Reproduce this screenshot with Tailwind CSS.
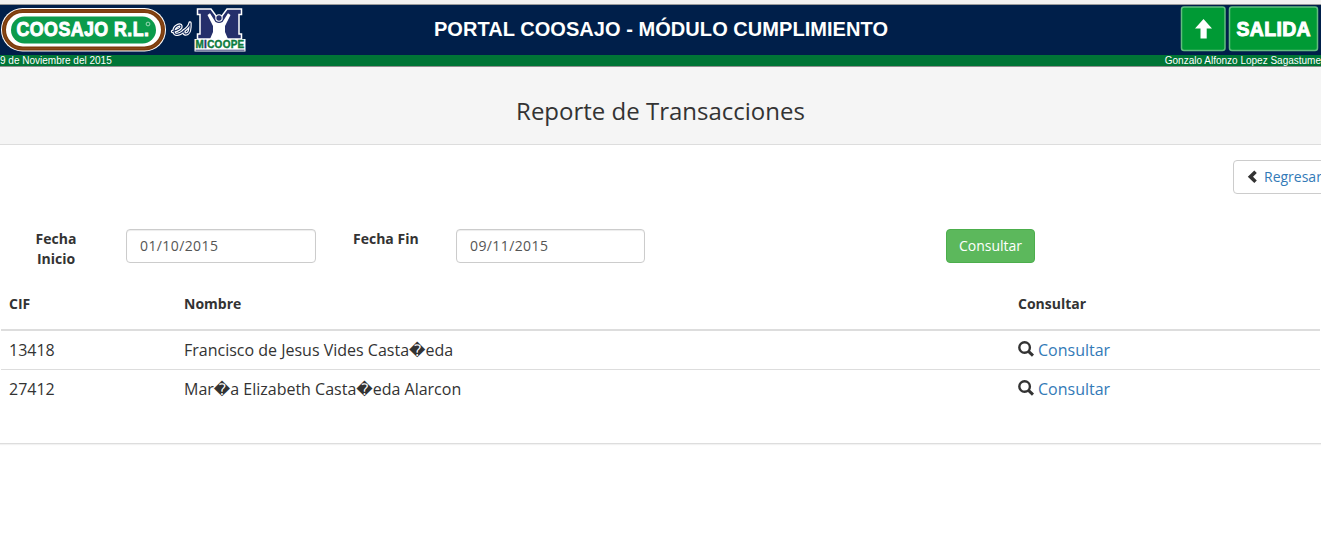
<!DOCTYPE html>
<html lang="es">
<head>
<meta charset="utf-8">
<title>Portal Coosajo</title>
<script src="https://cdn.jsdelivr.net/npm/@tailwindcss/browser@4"></script>
</head>
<body class="h-[537px] overflow-hidden bg-white font-['Open_Sans',sans-serif] text-sm leading-5 text-[#333]">
<header class="border-b border-[#8f8f8f] bg-[#f2f1f0] pt-1 font-['Liberation_Sans',sans-serif] text-white">
  <div class="grid h-[51px] grid-cols-[1fr_auto_1fr] items-center border-t border-[#9a9a9a] bg-[#001f4a]">
    <svg class="block h-[50px] w-[250px]" viewBox="0 5 250 50">
      <rect x="1" y="8" width="165" height="43.5" rx="21.5" fill="#fff"/>
      <rect x="4" y="11" width="159" height="37.500" rx="18.700" fill="none" stroke="#7c3c0c" stroke-width="4"/>
      <rect x="4" y="11" width="159" height="37.500" rx="18.700" fill="none" stroke="#96572a" stroke-width=".5"/>
      <rect x="11" y="16.500" width="145" height="27" rx="13.500" fill="#0b9b4b"/>
      <text x="16.500" y="36" textLength="133" lengthAdjust="spacingAndGlyphs" font-family="Liberation Sans" font-weight="700" font-size="19.500" letter-spacing=".5" fill="#fff" stroke="#fff" stroke-width=".9">COOSAJO R.L.</text>
      <circle cx="148" cy="24" r="1.900" fill="none" stroke="#bfe6cf" stroke-width=".8"/>
      <g fill="none" stroke-linecap="round" stroke-linejoin="round">
        <path d="M172.500 31.500c5-1 9-3 8.500-5.500s-7 0-7 5 5 4 10 0" stroke="#fff" stroke-width="3.400"/>
        <path d="M183.500 31c3-2 6-5 6.500-8 .2 4 .5 9-2.500 10.500-2 1-4 .3-3.500-1.500" stroke="#fff" stroke-width="3.400"/>
        <path d="M172.500 31.500c5-1 9-3 8.500-5.500s-7 0-7 5 5 4 10 0M183.500 31c3-2 6-5 6.500-8 .2 4 .5 9-2.500 10.500-2 1-4 .3-3.500-1.500" stroke="#10275a" stroke-width="1.100"/>
      </g>
      <path d="M197.500 9H211l8 11 8-11h14.500v5.500H239V34h2.500v5h-44v-5h2.500V14.500h-2.500z" fill="#252f6b" stroke="#fff" stroke-width="1.500"/>
      <path d="M207.500 15 210 13.200 215.500 22q3.500 2 7 0L228 13.200l2.500 1.800-5.500 11v6l3 7h-18l3-7v-6z" fill="#fff"/>
      <circle cx="219" cy="18" r="3.200" fill="#252f6b" stroke="#fff" stroke-width="1.100"/>
      <rect x="194.500" y="39" width="51" height="12.500" fill="#fff"/>
      <text x="195.500" y="48.300" textLength="49" lengthAdjust="spacingAndGlyphs" font-family="Liberation Sans" font-weight="700" font-size="10" letter-spacing=".3" fill="#0c7b3d" stroke="#0c7b3d" stroke-width=".4">M<tspan fill="#27306c" stroke="#27306c">I</tspan>COOPE</text>
      <path d="M195.500 50.200h49" stroke="#27306c" stroke-width=".9"/>
    </svg>
    <h1 class="-mt-[2px] translate-x-[0.5px] text-[20px] leading-6 font-bold tracking-[0.05px]">PORTAL COOSAJO - MÓDULO CUMPLIMIENTO</h1>
    <svg class="block h-[50px] w-[141px] justify-self-end" viewBox="1180 5 141 50">
      <rect x="1181.500" y="7" width="43.500" height="43.500" rx="2.500" fill="#009a35" stroke="#61be7e" stroke-width="1.500"/>
      <rect x="1229.500" y="7" width="88" height="43.500" rx="2.500" fill="#009a35" stroke="#61be7e" stroke-width="1.500"/>
      <path d="M1203.500 19 1212 28.500h-5.300V38.500h-6.200V28.500h-5.500z" fill="#fff"/>
      <text x="1236.500" y="36" textLength="74.500" lengthAdjust="spacingAndGlyphs" font-family="Liberation Sans" font-weight="700" font-size="20" letter-spacing=".4" fill="#fff" stroke="#fff" stroke-width="1">SALIDA</text>
    </svg>
  </div>
  <div class="flex h-[11px] justify-between bg-[#007536] text-[10px] leading-[11px]">
    <span>9 de Noviembre del 2015</span><span>Gonzalo Alfonzo Lopez Sagastume</span>
  </div>
</header>
<section class="h-[78px] border-b border-[#ddd] bg-[#f5f5f5] pt-[31px] text-center">
  <h2 class="text-2xl leading-[26px]">Reporte de Transacciones</h2>
</section>
<main class="h-[299px] border-b border-[#ddd] pt-[15px] shadow-[0_1px_1px_rgba(0,0,0,0.05)]">
  <div class="ml-[1233px] flex h-[34px] w-[102px] items-center rounded border border-[#ccc] pl-[13px] text-[#337ab7]">
    <svg class="mr-[7px] block h-[14px] w-[10px] shrink-0" viewBox="0 0 10 14"><path d="M7.300.5 9.800 3 6 6.800l3.800 3.800-2.500 2.500L.8 6.800z" fill="#333"/></svg>Regresar
  </div>
  <form class="mt-[35px] flex h-[40px] items-start">
    <label class="w-[112px] text-center font-bold">Fecha<br>Inicio</label>
    <input type="text" value="01/10/2015" class="ml-[14px] h-[34px] w-[190px] rounded border border-[#ccc] px-[13px] pb-[2px] tracking-[0.4px] text-[#555] shadow-[inset_0_1px_1px_rgba(0,0,0,0.075)]">
    <label class="ml-[37px] w-[103px] font-bold">Fecha Fin</label>
    <input type="text" value="09/11/2015" class="h-[34px] w-[189px] rounded border border-[#ccc] px-[13px] pb-[2px] tracking-[0.4px] text-[#555] shadow-[inset_0_1px_1px_rgba(0,0,0,0.075)]">
    <button type="button" class="ml-[301px] h-[34px] w-[89px] rounded border border-[#4cae4c] bg-[#5cb85c] text-white">Consultar</button>
  </form>
  <div class="mx-px mt-[16px]">
    <div class="grid h-[46px] grid-cols-[175px_834px_1fr] border-b-2 border-[#ddd] pt-[9px] pl-2 font-bold"><span>CIF</span><span>Nombre</span><span>Consultar</span></div>
    <div class="grid h-[38px] grid-cols-[175px_834px_1fr] items-center pl-2 text-base leading-[22px]">
      <span>13418</span><span>Francisco de Jesus Vides Casta<span class="font-['DejaVu_Sans']">�</span>eda</span>
      <span class="flex items-center gap-1 text-[#337ab7]"><svg class="-mt-[2px] h-4 w-4" viewBox="0 0 16 16" fill="none" stroke="#333"><circle cx="6.600" cy="6.500" r="5.300" stroke-width="2.400"/><path d="m10.500 10.300 4.500 4.300" stroke-width="3"/></svg>Consultar</span>
    </div>
    <div class="grid h-[39px] grid-cols-[175px_834px_1fr] items-center border-t border-[#ddd] pl-2 text-base leading-[22px]">
      <span>27412</span><span>Mar<span class="font-['DejaVu_Sans']">�</span>a Elizabeth Casta<span class="font-['DejaVu_Sans']">�</span>eda Alarcon</span>
      <span class="flex items-center gap-1 text-[#337ab7]"><svg class="-mt-[2px] h-4 w-4" viewBox="0 0 16 16" fill="none" stroke="#333"><circle cx="6.600" cy="6.500" r="5.300" stroke-width="2.400"/><path d="m10.500 10.300 4.500 4.300" stroke-width="3"/></svg>Consultar</span>
    </div>
  </div>
</main>
</body>
</html>
